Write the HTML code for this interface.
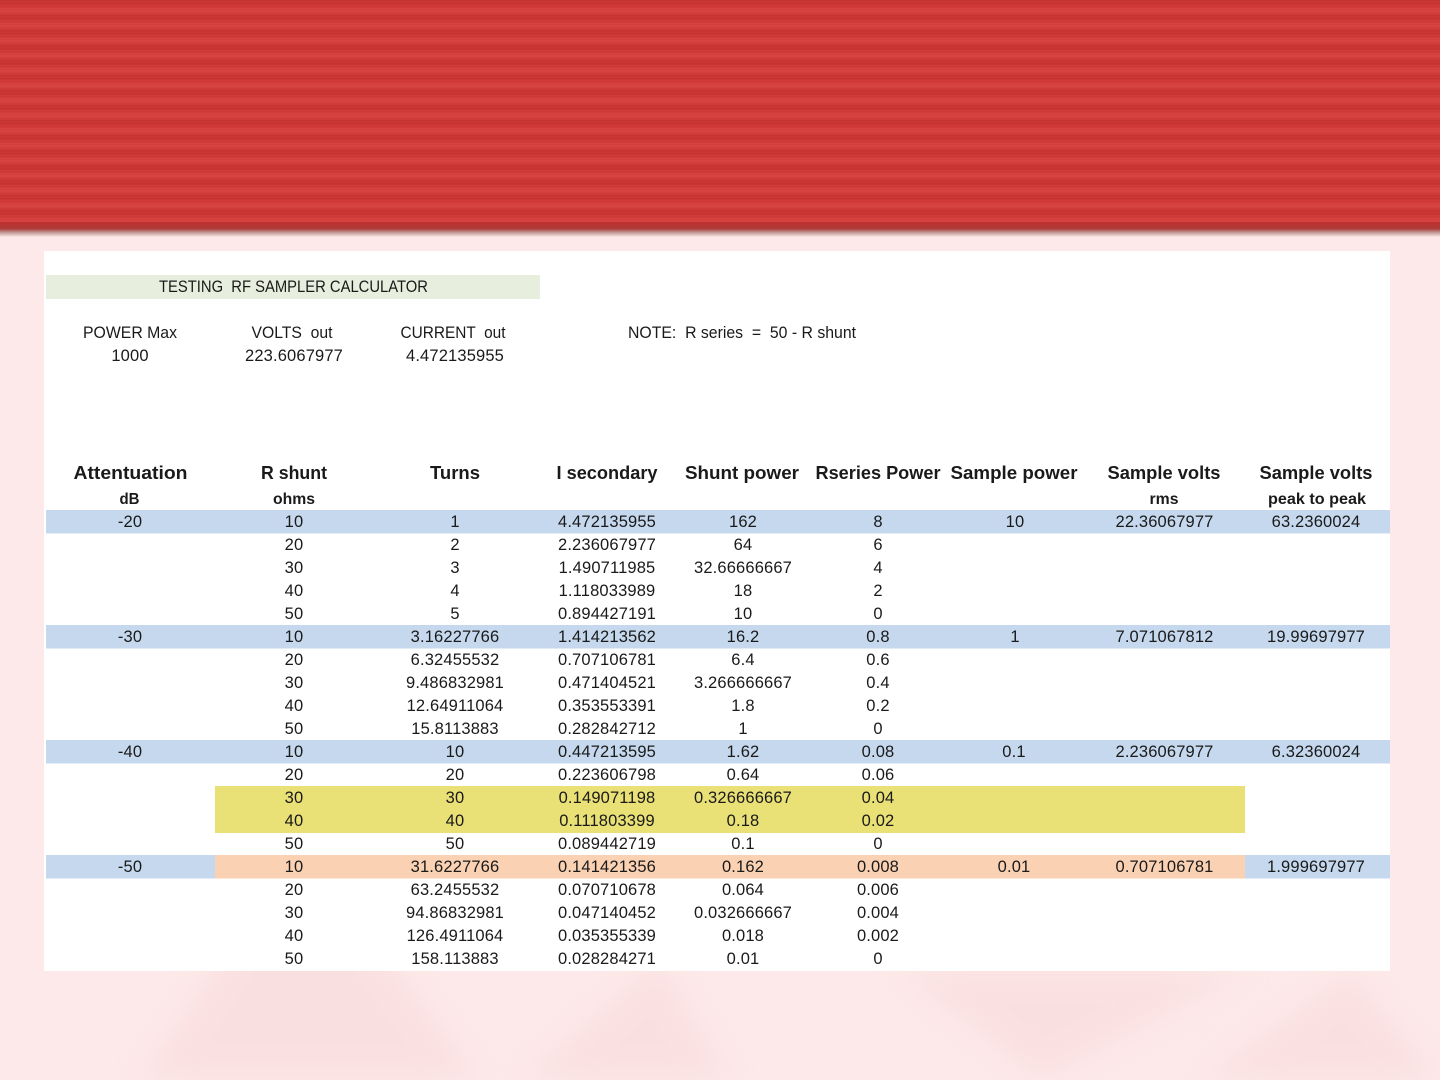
<!DOCTYPE html>
<html lang="en">
<head>
<meta charset="utf-8">
<title>Testing RF Sampler Calculator</title>
<style>
html,body{margin:0;padding:0;width:1440px;height:1080px;overflow:hidden;background:#fde9e9}
svg{display:block;position:absolute;left:0;top:0}
text{font-family:"Liberation Sans",sans-serif;font-size:16.5px;fill:#1a1a1a;text-anchor:middle;letter-spacing:.15px;white-space:pre}
.h{font-size:18.5px;font-weight:700;letter-spacing:0}
.s{font-size:15.5px;font-weight:700;letter-spacing:0}
.l{letter-spacing:0}
.soft{filter:blur(.3px)}
</style>
</head>
<body>
<svg width="1440" height="1080" viewBox="0 0 1440 1080" xmlns="http://www.w3.org/2000/svg">
<defs>
<linearGradient id="edge" x1="0" y1="0" x2="0" y2="1">
<stop offset="0" stop-color="#bd2f2e"/><stop offset=".45" stop-color="#ad3d3a"/><stop offset=".7" stop-color="#c09a96"/><stop offset="1" stop-color="#fde6e6"/>
</linearGradient>
<pattern id="bands" width="15" height="15" patternUnits="userSpaceOnUse">
<rect width="15" height="15" fill="#d03b39"/>
<rect y="0" width="15" height="5" fill="#ca3633"/>
<rect y="8" width="15" height="5" fill="#d64340"/>
</pattern>
<pattern id="lines" width="4" height="3" patternUnits="userSpaceOnUse">
<rect y="0" width="4" height="1" fill="#b52a22" opacity=".14"/>
</pattern>
<filter id="bl"><feGaussianBlur stdDeviation="14"/></filter>
</defs>
<rect width="1440" height="1080" fill="#fde9e9"/>
<g fill="#f9dadb" opacity=".6" filter="url(#bl)">
<polygon points="140,1080 300,840 480,1080"/>
<polygon points="520,1080 660,960 730,1080"/>
<polygon points="900,971 1250,971 1040,1080"/>
<polygon points="1200,1080 1350,971 1440,1080"/>
</g>
<rect width="1440" height="222" fill="url(#bands)"/>
<rect width="1440" height="222" fill="url(#lines)"/>
<rect y="222" width="1440" height="15" fill="url(#edge)"/>

<rect x="44" y="251" width="1346" height="720" fill="#fff"/>
<rect x="46" y="275" width="494" height="24" fill="#e8eedd"/>
<g fill="#c5d8ed">
<rect x="46" y="510" width="1344" height="23.5"/>
<rect x="46" y="625" width="1344" height="23.5"/>
<rect x="46" y="740" width="1344" height="23.5"/>
<rect x="46" y="855" width="1344" height="23.5"/>
</g>
<rect x="215" y="786" width="1030" height="47" fill="#e9e076"/>
<rect x="215" y="855" width="1030" height="23.5" fill="#fbd1b3"/>

<g class="soft">
<text x="293.500" y="292" class="l" xml:space="preserve" textLength="269" lengthAdjust="spacingAndGlyphs">TESTING  RF SAMPLER CALCULATOR</text>
<text x="130" y="338" class="l" textLength="94" lengthAdjust="spacingAndGlyphs">POWER Max</text>
<text x="292" y="338" class="l" xml:space="preserve" textLength="81" lengthAdjust="spacingAndGlyphs">VOLTS  out</text>
<text x="453" y="338" class="l" xml:space="preserve" textLength="105" lengthAdjust="spacingAndGlyphs">CURRENT  out</text>
<text x="742" y="338" class="l" xml:space="preserve" textLength="228" lengthAdjust="spacingAndGlyphs">NOTE:  R series  =  50 - R shunt</text>
<text x="130" y="361">1000</text><text x="294" y="361">223.6067977</text><text x="455" y="361">4.472135955</text>

<text class="h" x="130.500" y="479" textLength="114" lengthAdjust="spacingAndGlyphs">Attentuation</text>
<text class="h" x="294" y="479" textLength="66" lengthAdjust="spacingAndGlyphs">R shunt</text>
<text class="h" x="455" y="479" textLength="50" lengthAdjust="spacingAndGlyphs">Turns</text>
<text class="h" x="607" y="479" textLength="101" lengthAdjust="spacingAndGlyphs">I secondary</text>
<text class="h" x="742" y="479" textLength="114" lengthAdjust="spacingAndGlyphs">Shunt power</text>
<text class="h" x="878" y="479" textLength="125" lengthAdjust="spacingAndGlyphs">Rseries Power</text>
<text class="h" x="1014" y="479" textLength="127" lengthAdjust="spacingAndGlyphs">Sample power</text>
<text class="h" x="1164" y="479" textLength="113" lengthAdjust="spacingAndGlyphs">Sample volts</text>
<text class="h" x="1316" y="479" textLength="113" lengthAdjust="spacingAndGlyphs">Sample volts</text>
<text class="s" x="129.500" y="504" textLength="20" lengthAdjust="spacingAndGlyphs">dB</text>
<text class="s" x="294" y="504" textLength="42" lengthAdjust="spacingAndGlyphs">ohms</text>
<text class="s" x="1164" y="504" textLength="29" lengthAdjust="spacingAndGlyphs">rms</text>
<text class="s" x="1317" y="504" textLength="98" lengthAdjust="spacingAndGlyphs">peak to peak</text>

<text x="130" y="527">-20</text><text x="294" y="527">10</text><text x="455" y="527">1</text><text x="607" y="527">4.472135955</text><text x="743" y="527">162</text><text x="878" y="527">8</text><text x="1015" y="527">10</text><text x="1164.500" y="527">22.36067977</text><text x="1316" y="527">63.2360024</text>
<text x="294" y="550">20</text><text x="455" y="550">2</text><text x="607" y="550">2.236067977</text><text x="743" y="550">64</text><text x="878" y="550">6</text>
<text x="294" y="573">30</text><text x="455" y="573">3</text><text x="607" y="573">1.490711985</text><text x="743" y="573">32.66666667</text><text x="878" y="573">4</text>
<text x="294" y="596">40</text><text x="455" y="596">4</text><text x="607" y="596">1.118033989</text><text x="743" y="596">18</text><text x="878" y="596">2</text>
<text x="294" y="619">50</text><text x="455" y="619">5</text><text x="607" y="619">0.894427191</text><text x="743" y="619">10</text><text x="878" y="619">0</text>

<text x="130" y="642">-30</text><text x="294" y="642">10</text><text x="455" y="642">3.16227766</text><text x="607" y="642">1.414213562</text><text x="743" y="642">16.2</text><text x="878" y="642">0.8</text><text x="1015" y="642">1</text><text x="1164.500" y="642">7.071067812</text><text x="1316" y="642">19.99697977</text>
<text x="294" y="665">20</text><text x="455" y="665">6.32455532</text><text x="607" y="665">0.707106781</text><text x="743" y="665">6.4</text><text x="878" y="665">0.6</text>
<text x="294" y="688">30</text><text x="455" y="688">9.486832981</text><text x="607" y="688">0.471404521</text><text x="743" y="688">3.266666667</text><text x="878" y="688">0.4</text>
<text x="294" y="711">40</text><text x="455" y="711">12.64911064</text><text x="607" y="711">0.353553391</text><text x="743" y="711">1.8</text><text x="878" y="711">0.2</text>
<text x="294" y="734">50</text><text x="455" y="734">15.8113883</text><text x="607" y="734">0.282842712</text><text x="743" y="734">1</text><text x="878" y="734">0</text>

<text x="130" y="757">-40</text><text x="294" y="757">10</text><text x="455" y="757">10</text><text x="607" y="757">0.447213595</text><text x="743" y="757">1.62</text><text x="878" y="757">0.08</text><text x="1014" y="757">0.1</text><text x="1164.500" y="757">2.236067977</text><text x="1316" y="757">6.32360024</text>
<text x="294" y="780">20</text><text x="455" y="780">20</text><text x="607" y="780">0.223606798</text><text x="743" y="780">0.64</text><text x="878" y="780">0.06</text>
<text x="294" y="803">30</text><text x="455" y="803">30</text><text x="607" y="803">0.149071198</text><text x="743" y="803">0.326666667</text><text x="878" y="803">0.04</text>
<text x="294" y="826">40</text><text x="455" y="826">40</text><text x="607" y="826">0.111803399</text><text x="743" y="826">0.18</text><text x="878" y="826">0.02</text>
<text x="294" y="849">50</text><text x="455" y="849">50</text><text x="607" y="849">0.089442719</text><text x="743" y="849">0.1</text><text x="878" y="849">0</text>

<text x="130" y="872">-50</text><text x="294" y="872">10</text><text x="455" y="872">31.6227766</text><text x="607" y="872">0.141421356</text><text x="743" y="872">0.162</text><text x="878" y="872">0.008</text><text x="1014" y="872">0.01</text><text x="1164.500" y="872">0.707106781</text><text x="1316" y="872">1.999697977</text>
<text x="294" y="895">20</text><text x="455" y="895">63.2455532</text><text x="607" y="895">0.070710678</text><text x="743" y="895">0.064</text><text x="878" y="895">0.006</text>
<text x="294" y="918">30</text><text x="455" y="918">94.86832981</text><text x="607" y="918">0.047140452</text><text x="743" y="918">0.032666667</text><text x="878" y="918">0.004</text>
<text x="294" y="941">40</text><text x="455" y="941">126.4911064</text><text x="607" y="941">0.035355339</text><text x="743" y="941">0.018</text><text x="878" y="941">0.002</text>
<text x="294" y="964">50</text><text x="455" y="964">158.113883</text><text x="607" y="964">0.028284271</text><text x="743" y="964">0.01</text><text x="878" y="964">0</text>
</g>
</svg>
</body>
</html>
